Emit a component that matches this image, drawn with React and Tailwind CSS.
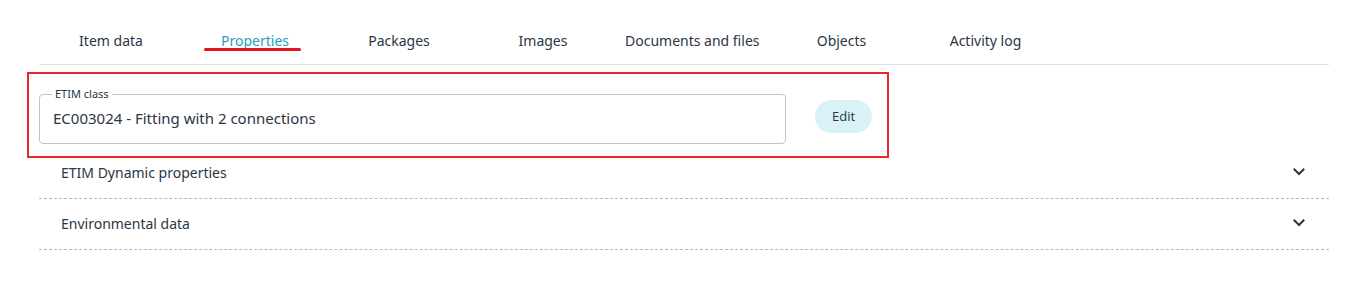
import React from "react";

const tabs = [
  "Item data",
  "Properties",
  "Packages",
  "Images",
  "Documents and files",
  "Objects",
  "Activity log",
];

const sections = ["ETIM Dynamic properties", "Environmental data"];

function Chevron() {
  return (
    <svg width="14" height="14" viewBox="0 0 14 14" fill="none">
      <path
        d="M2.5 4.5 7 9l4.5-4.5"
        stroke="#2b3645"
        strokeWidth="2"
        strokeLinecap="square"
      />
    </svg>
  );
}

export default function App() {
  return (
    <div
      className="w-[1366px] h-[283px] bg-white pt-[18px] pl-[39px] pr-[37px] text-[#2b3645]"
      style={{ fontFamily: '"Noto Sans", Roboto, sans-serif' }}
    >
      <div className="flex h-[47px] border-b border-[#e0e0e0]">
        {tabs.map((tab) => {
          const active = tab === "Properties";
          return (
            <div
              key={tab}
              className={`relative flex min-w-[144px] items-center justify-center px-[10px] pb-[1px] text-[14px] ${
                active ? "text-[#2a9fc4]" : ""
              }`}
            >
              {tab}
              {active && (
                <span className="absolute left-[21px] top-[30px] h-[3px] w-[97px] rounded-full bg-[#e3141c]" />
              )}
            </div>
          );
        })}
      </div>

      <div className="mt-[7px] -ml-[12px] flex h-[86px] w-[862px] items-start border-2 border-[#e8262b] pl-[10px]">
        <fieldset className="mt-[14px] h-[56px] w-[747px] rounded-[4px] border border-[#c4c4c4] px-[13px]">
          <legend className="px-[3px] text-[11px] leading-[12px] -ml-[1px]">
            ETIM class
          </legend>
          <div className="pt-[8px] text-[15px] leading-[20px]">
            EC003024 - Fitting with 2 connections
          </div>
        </fieldset>
        <button
          className="ml-[29px] mt-[26px] h-[33px] w-[57px] rounded-full bg-[#d9f2f7] text-[13px] text-[#2b3645]"
          style={{ fontFamily: '"Open Sans", sans-serif' }}
        >
          Edit
        </button>
      </div>

      <div className="-mt-[10px]">
        {sections.map((s) => (
          <div
            key={s}
            className="flex h-[51px] items-center justify-between border-b border-dashed border-[#b8b8b8] pb-[2px] pl-[22px] pr-[23px] text-[14px]"
          >
            <span>{s}</span>
            <Chevron />
          </div>
        ))}
      </div>
    </div>
  );
}
